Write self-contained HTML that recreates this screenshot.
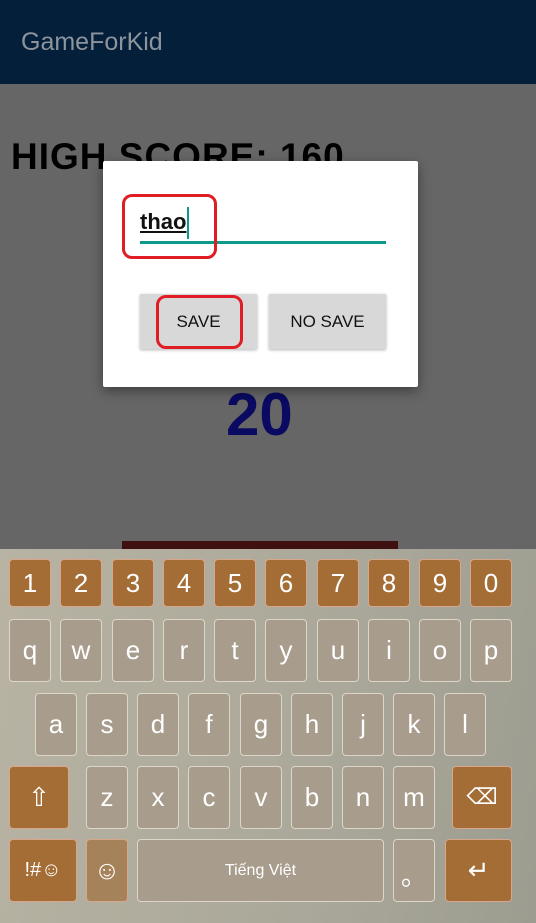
<!DOCTYPE html>
<html><head><meta charset="utf-8"><style>
*{margin:0;padding:0;box-sizing:border-box}
body{width:536px;height:923px;overflow:hidden;position:relative;background:#666;font-family:"Comic Sans MS","Liberation Sans",sans-serif}
.hdr{position:absolute;left:0;top:0;width:536px;height:84px;background:#031f3a;color:#8d949b;font-size:25px;padding:28px 0 0 21px}
.hs{position:absolute;left:11px;top:136px;font-size:37px;font-weight:bold;color:#000;letter-spacing:1px}
.num{position:absolute;left:226px;top:380px;font-size:60px;color:#0a0a62;font-weight:bold}
.dlg{position:absolute;left:103px;top:161px;width:315px;height:226px;background:#fff;border-radius:2px;box-shadow:0 4px 12px rgba(0,0,0,.4)}
.line{position:absolute;left:37px;top:80px;width:246px;height:3px;background:#0e9a8a}
.txt{position:absolute;left:37px;top:48px;font-size:22px;color:#111;font-weight:bold;text-decoration:underline}
.cur{position:absolute;left:84px;top:46px;width:2px;height:32px;background:#0e9a8a}
.red{position:absolute;border:3px solid #e01c24;border-radius:10px}
.btn{position:absolute;top:133px;width:117px;height:55px;background:#d8d8d8;box-shadow:0 1px 3px rgba(0,0,0,.3);font-size:17px;text-align:center;line-height:55px;color:#111;font-family:"Liberation Sans",sans-serif}
.bar{position:absolute;left:122px;top:541px;width:276px;height:8px;background:#3e1010}
.kb{position:absolute;left:0;top:549px;width:536px;height:374px;background:linear-gradient(100deg,#b8b3a3,#aaa89a 60%,#9c9c90)}
.k{position:absolute;width:42px;height:63px;background:#a89d8d;border:1px solid #ddd6c8;border-radius:4px;color:#fff;font-size:26px;text-align:center;line-height:60px}
.b{background:#a36d35;border-color:#d9a68c}
.n{height:48px;line-height:46px;top:10px}
</style></head><body>
<div class="hdr">GameForKid</div>
<div class="hs">HIGH SCORE: 160</div>
<div class="num">20</div>
<div class="dlg">
<div class="txt">thao</div><div class="cur"></div><div class="line"></div>
<div class="red" style="left:19px;top:33px;width:95px;height:65px"></div>
<div class="btn" style="left:37px">SAVE</div>
<div class="btn" style="left:166px">NO SAVE</div>
<div class="red" style="left:53px;top:134px;width:87px;height:54px"></div>
</div>
<div class="bar"></div>
<div class="kb">
<div class="k b n" style="left:9px">1</div><div class="k b n" style="left:60px">2</div><div class="k b n" style="left:112px">3</div><div class="k b n" style="left:163px">4</div><div class="k b n" style="left:214px">5</div><div class="k b n" style="left:265px">6</div><div class="k b n" style="left:317px">7</div><div class="k b n" style="left:368px">8</div><div class="k b n" style="left:419px">9</div><div class="k b n" style="left:470px">0</div>
<div class="k" style="left:9px;top:70px">q</div><div class="k" style="left:60px;top:70px">w</div><div class="k" style="left:112px;top:70px">e</div><div class="k" style="left:163px;top:70px">r</div><div class="k" style="left:214px;top:70px">t</div><div class="k" style="left:265px;top:70px">y</div><div class="k" style="left:317px;top:70px">u</div><div class="k" style="left:368px;top:70px">i</div><div class="k" style="left:419px;top:70px">o</div><div class="k" style="left:470px;top:70px">p</div>
<div class="k" style="left:35px;top:144px">a</div><div class="k" style="left:86px;top:144px">s</div><div class="k" style="left:137px;top:144px">d</div><div class="k" style="left:188px;top:144px">f</div><div class="k" style="left:240px;top:144px">g</div><div class="k" style="left:291px;top:144px">h</div><div class="k" style="left:342px;top:144px">j</div><div class="k" style="left:393px;top:144px">k</div><div class="k" style="left:444px;top:144px">l</div>
<div class="k b" style="left:9px;top:217px;width:60px">⇧</div><div class="k" style="left:86px;top:217px">z</div><div class="k" style="left:137px;top:217px">x</div><div class="k" style="left:188px;top:217px">c</div><div class="k" style="left:240px;top:217px">v</div><div class="k" style="left:291px;top:217px">b</div><div class="k" style="left:342px;top:217px">n</div><div class="k" style="left:393px;top:217px">m</div><div class="k b" style="left:452px;top:217px;width:60px;font-size:22px">⌫</div>
<div class="k b" style="left:9px;top:290px;width:68px;font-size:20px">!#☺</div><div class="k b" style="left:86px;top:290px;background:#a5825a">☺</div><div class="k" style="left:137px;top:290px;width:247px;font-size:16px;line-height:62px">Tiếng Việt</div><div class="k" style="left:393px;top:290px;line-height:72px">。</div><div class="k b" style="left:445px;top:290px;width:67px">↵</div>
</div>
</body></html>
